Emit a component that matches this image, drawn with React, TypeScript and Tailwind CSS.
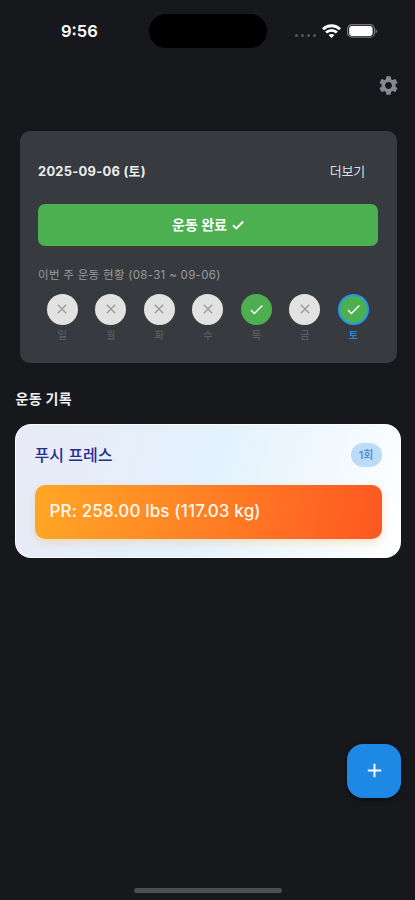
import { MdAdd, MdCheck, MdClose, MdSettings } from "react-icons/md";

type Day = { label: string; done: boolean; today?: boolean };

const week: Day[] = [
  { label: "일", done: false },
  { label: "월", done: false },
  { label: "화", done: false },
  { label: "수", done: false },
  { label: "목", done: true },
  { label: "금", done: false },
  { label: "토", done: true, today: true },
];

function StatusBar() {
  return (
    <div className="flex h-[34px] items-center pl-[61px]">
      <span className="w-[88px] text-[16.5px] font-semibold leading-none text-white">9:56</span>
      <div className="h-[34px] w-[118px] rounded-full bg-black" />
      <div className="ml-[28px] mt-[9px] flex gap-[3px]">
        {[0, 1, 2, 3].map((n) => (
          <span key={n} className="size-[3px] rounded-full bg-[#55565a]" />
        ))}
      </div>
      <svg className="ml-[6px] h-[14px] w-[19px]" viewBox="0 0 19 14" fill="none" stroke="#fff" strokeWidth="2.8">
        <path d="M1 5.2C5.7 0.6 13.3 0.6 18 5.2" />
        <path d="M4.1 8.6C7.1 5.7 11.9 5.7 14.9 8.6" />
        <path d="M9.5 13.9L6.6 11C8.2 9.5 10.8 9.5 12.4 11Z" fill="#fff" stroke="none" />
      </svg>
      <svg className="ml-[6px] h-[14px] w-[31px]" viewBox="0 0 31 14">
        <rect x="0.6" y="0.6" width="26.8" height="12.6" rx="4.3" fill="none" stroke="#77787b" strokeWidth="1.2" />
        <rect x="2.2" y="2.1" width="23.4" height="9.8" rx="2.8" fill="#fff" />
        <path d="M28.6 5v4.4c1.7-.7 1.7-3.7 0-4.4Z" fill="#8b8c8f" />
      </svg>
    </div>
  );
}

function DayMark({ day }: { day: Day }) {
  const circle = day.done
    ? day.today
      ? "border-2 border-[#2196f3] bg-[#4caf50] text-white"
      : "bg-[#4caf50] text-white"
    : "bg-[#e2e2e2] text-[#9b9b9b]";
  return (
    <div className="flex w-[48.5px] flex-col items-center">
      <div className={`flex size-[31px] items-center justify-center rounded-full ${circle}`}>
        {day.done ? <MdCheck className="size-[17px] shrink-0" /> : <MdClose className="size-[16px] shrink-0" />}
      </div>
      <span className={`mt-[4px] text-[10px] leading-[13px] ${day.today ? "font-bold text-[#2188dc]" : "text-[#626568]"}`}>
        {day.label}
      </span>
    </div>
  );
}

export default function App() {
  return (
    <div className="flex h-[900px] w-[415px] flex-col bg-[#17181c] pt-[14px] font-['Inter','Noto_Sans_CJK_KR',sans-serif]">
      <StatusBar />
      <div className="mt-[26px] flex h-[23px] justify-end pr-[15.5px]">
        <MdSettings className="size-[23px] text-[#85888f]" />
      </div>

      <section className="ml-[19.5px] mt-[33.5px] flex h-[232px] w-[377px] flex-col rounded-[10px] bg-[#373a3f] px-[18.5px] pt-[31px]">
        <div className="flex h-[20px] items-center justify-between pr-[13px]">
          <h1 className="whitespace-nowrap text-[12.9px] font-bold leading-5 tracking-[0.27px] text-[#eceded]">2025-09-06 (토)</h1>
          <span className="-mt-[2px] text-[13px] leading-5 tracking-[-0.2px] text-[#dddee2]">더보기</span>
        </div>
        <button className="mt-[22px] flex h-[42px] w-full shrink-0 items-center justify-center gap-[5px] rounded-[7px] bg-[#4caf50] text-[14px] font-bold text-white">
          운동 완료
          <svg className="h-[10px] w-[12px]" viewBox="0 0 12 10" fill="none" stroke="currentColor" strokeWidth="1.9">
            <path d="M1 5.2L4.3 8.4L11.2 1.5" />
          </svg>
        </button>
        <p className="mt-[19px] whitespace-nowrap text-[11.5px] leading-5 tracking-[0.3px] text-[#989a9e]">이번 주 운동 현황 (08-31 ~ 09-06)</p>
        <div className="mt-[9px] flex">
          {week.map((day) => (
            <DayMark key={day.label} day={day} />
          ))}
        </div>
      </section>

      <h2 className="ml-[15.5px] mt-[26px] text-[14px] font-bold leading-5 tracking-[0.3px] text-[#f1f1f1]">운동 기록</h2>

      <section className="ml-[15px] mt-[15px] h-[134px] w-[386px] rounded-[16px] border border-white/80 bg-linear-[109deg] from-[#e8eaf6] via-[#e3f2fd] via-50% to-white px-[18.5px] pt-[18px]">
        <div className="flex h-[25px] items-center justify-between">
          <h3 className="text-[16px] font-medium leading-6 text-[#282c91]">푸시 프레스</h3>
          <span className="flex h-[24px] w-[31px] items-center justify-center rounded-full bg-[#badcf9] text-[11px] font-medium text-[#4a83d4]">1회</span>
        </div>
        <div className="mt-[17px] flex h-[54px] items-center rounded-[10px] bg-linear-[99deg] from-[#ffa726] to-[#ff5722] pl-[15px] pt-px text-[17px] font-medium tracking-[0.15px] text-[#fff8ef] shadow-[0_4px_8px_rgba(255,152,0,0.22)]">
          PR: 258.00 lbs (117.03 kg)
        </div>
      </section>

      <button className="ml-[347px] mt-[186px] flex size-[54px] shrink-0 items-center justify-center rounded-[16px] bg-[#1e88e5] text-white shadow-[0_2px_5px_rgba(0,0,0,0.5)]">
        <MdAdd className="size-[23px]" />
      </button>
      <div className="ml-[134px] mt-[90px] h-[5px] w-[148px] shrink-0 rounded-full bg-[#4d4e50]" />
    </div>
  );
}
